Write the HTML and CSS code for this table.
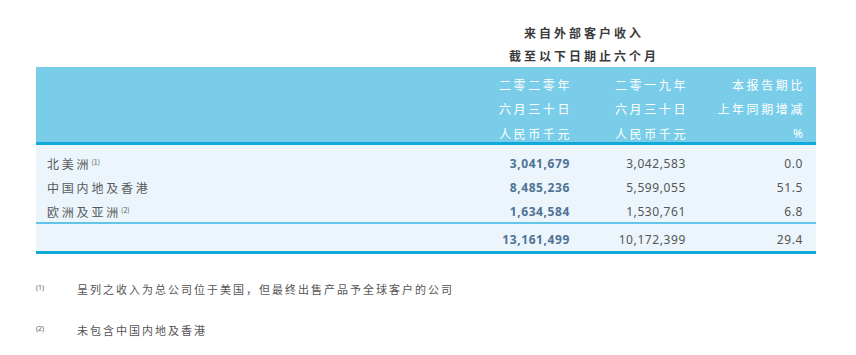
FILE: index.html
```html
<!DOCTYPE html>
<html>
<head>
  <meta charset="utf-8">
  <link rel="stylesheet" href="styles.css">
</head>
<body>
  <table class="revenue">
    <colgroup>
      <col class="c-label">
      <col class="c-num1">
      <col class="c-num2">
      <col class="c-num3">
    </colgroup>
    <thead>
      <tr class="title-row">
        <th></th>
        <th colspan="2" class="title">来自外部客户收入</th>
        <th></th>
      </tr>
      <tr class="title-row">
        <th></th>
        <th colspan="2" class="title">截至以下日期止六个月</th>
        <th></th>
      </tr>
      <tr class="head head-first">
        <th></th>
        <th>二零二零年</th>
        <th>二零一九年</th>
        <th>本报告期比</th>
      </tr>
      <tr class="head">
        <th></th>
        <th>六月三十日</th>
        <th>六月三十日</th>
        <th>上年同期增减</th>
      </tr>
      <tr class="head head-last">
        <th></th>
        <th>人民币千元</th>
        <th>人民币千元</th>
        <th class="pct">%</th>
      </tr>
    </thead>
    <tbody>
      <tr class="row row-first">
        <td class="label">北美洲<sup>(1)</sup></td>
        <td class="num cur">3,041,679</td>
        <td class="num">3,042,583</td>
        <td class="num">0.0</td>
      </tr>
      <tr class="row">
        <td class="label">中国内地及香港</td>
        <td class="num cur">8,485,236</td>
        <td class="num">5,599,055</td>
        <td class="num">51.5</td>
      </tr>
      <tr class="row row-last">
        <td class="label">欧洲及亚洲<sup>(2)</sup></td>
        <td class="num cur">1,634,584</td>
        <td class="num">1,530,761</td>
        <td class="num">6.8</td>
      </tr>
      <tr class="row total">
        <td class="label"></td>
        <td class="num cur">13,161,499</td>
        <td class="num">10,172,399</td>
        <td class="num">29.4</td>
      </tr>
    </tbody>
  </table>

  <div class="notes">
    <div class="note">
      <span class="mark">(1)</span>
      <span class="note-text">呈列之收入为总公司位于美国，但最终出售产品予全球客户的公司</span>
    </div>
    <div class="note">
      <span class="mark">(2)</span>
      <span class="note-text">未包含中国内地及香港</span>
    </div>
  </div>
</body>
</html>
```

FILE: styles.css
```css
body {
  margin: 0;
  background: #fff;
  font-family: "Noto Sans CJK SC", "Noto Sans", sans-serif;
  color: #555;
}

.revenue {
  margin: 21px 0 0 36px;
  width: 780px;
  border-collapse: separate;
  border-spacing: 0;
  table-layout: fixed;
}

.c-label { width: 430px; }
.c-num1  { width: 117px; }
.c-num2  { width: 116px; }
.c-num3  { width: 117px; }

th, td { padding: 0; font-weight: normal; }

/* title above the blue band */
.title-row th {
  height: 23px;
  line-height: 23px;
}
.title {
  text-align: center;
  font-size: 12px;
  font-weight: bold;
  letter-spacing: 3px;
  padding-left: 3px;
  color: #3a3a3a;
}

/* blue header */
.head th {
  background: #79cde9;
  color: #fff;
  font-size: 12px;
  letter-spacing: 2.6px;
  line-height: 24px;
  text-align: right;
  padding-right: 11px;
}
.head-first th { padding-top: 6px; }
.head-last th {
  padding-top: 4px;
  line-height: 17px;
  border-bottom: 3px solid #10a9d9;
}
.head th.pct {
  font-family: "Noto Sans", sans-serif;
  letter-spacing: 0;
  padding-right: 13px;
}

/* body rows */
.row td {
  background: #ebf5fb;
  line-height: 24px;
}
.row-first td { padding-top: 7px; }
.row-last td {
  padding-top: 2px;
  line-height: 20px;
  border-bottom: 2px solid #62c5e8;
}
.total td {
  padding-top: 4px;
  line-height: 23px;
  border-bottom: 3px solid #10a9d9;
}

.label {
  font-size: 12px;
  letter-spacing: 2.8px;
  padding-left: 11px;
  color: #595959;
}
.label sup {
  font-size: 7px;
  letter-spacing: 0;
  vertical-align: 4px;
  line-height: 0;
}

.num {
  font-family: "Noto Sans", sans-serif;
  font-size: 12px;
  letter-spacing: 0.6px;
  text-align: right;
  padding-right: 13px;
  color: #555;
}
.num.cur {
  font-weight: bold;
  color: #4f7396;
}

/* footnotes */
.notes {
  margin: 25px 0 0 36px;
  display: flex;
  flex-direction: column;
  gap: 21px;
}
.note {
  display: grid;
  grid-template-columns: 41px 1fr;
  align-items: center;
  line-height: 20px;
}
.mark {
  font-family: "Noto Sans", sans-serif;
  font-size: 7px;
  color: #555;
  line-height: 10px;
  margin-top: -2px;
}
.note-text {
  font-size: 11px;
  letter-spacing: 2px;
  color: #555;
}
```
